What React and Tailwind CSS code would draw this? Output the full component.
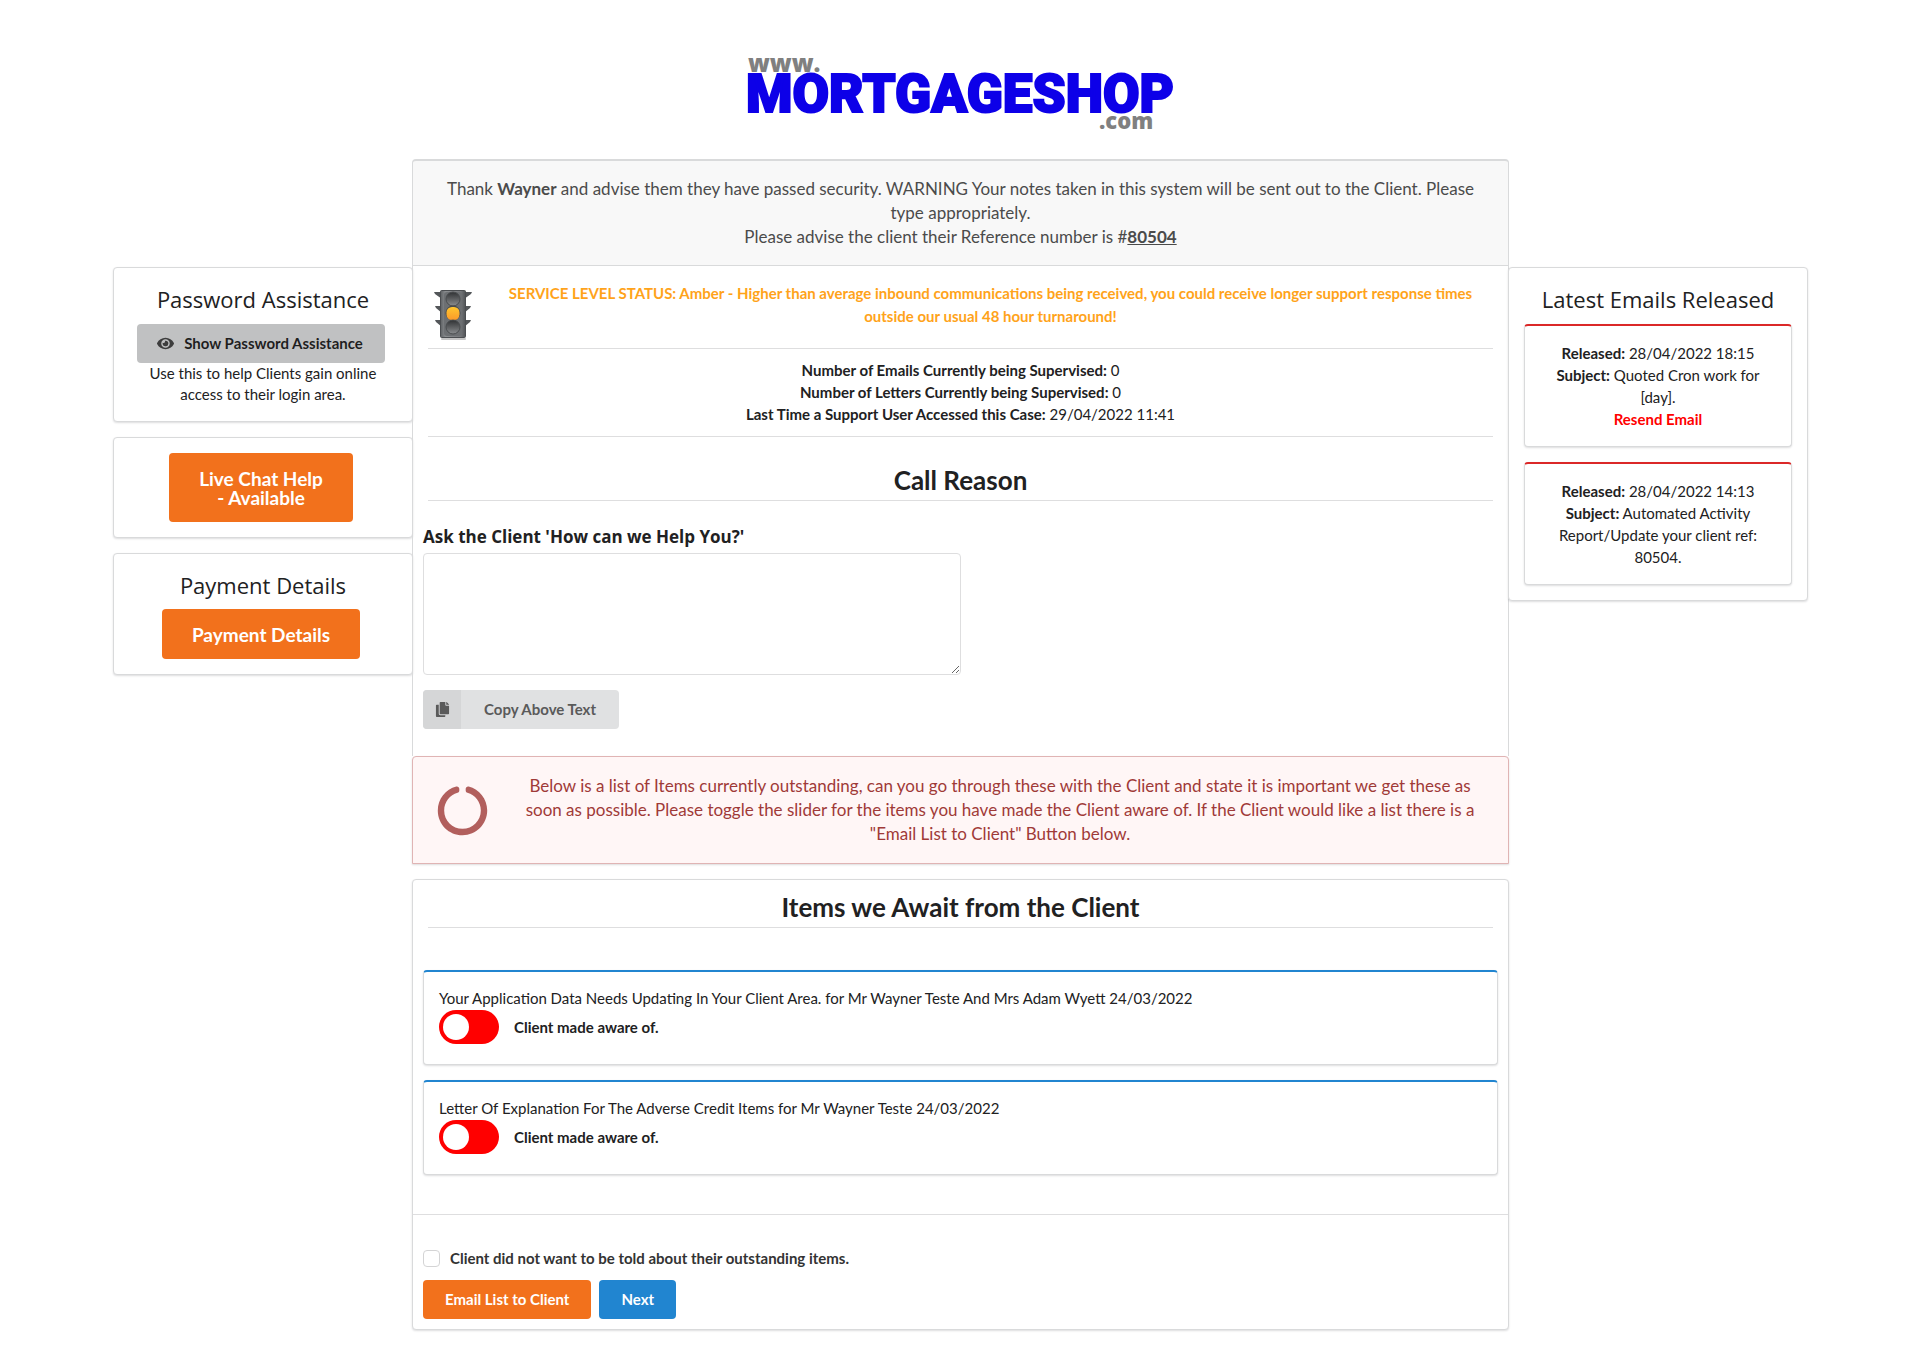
import { FaCircleNotch, FaCopy, FaEye } from "react-icons/fa";

const emails = [
    { released: "28/04/2022 18:15", subject: "Quoted Cron work for [day].", resend: true },
    { released: "28/04/2022 14:13", subject: "Automated Activity Report/Update your client ref: 80504.", resend: false },
];

const items = [
    "Your Application Data Needs Updating In Your Client Area. for Mr Wayner Teste And Mrs Adam Wyett 24/03/2022",
    "Letter Of Explanation For The Adverse Credit Items for Mr Wayner Teste 24/03/2022",
];

function Logo() {
    return (
        <svg viewBox="0 0 430 80" className="w-[430px] h-20 overflow-visible" role="img" aria-label="www.mortgageshop.com">
            <text x="2" y="20" fontSize="24" fontWeight="800" fill="#808080" fontFamily="Open Sans, sans-serif">www.</text>
            <text x="0" y="60" fontSize="53" fontWeight="900" fill="#0d00e8" stroke="#0d00e8" strokeWidth="2" fontFamily="Roboto, sans-serif">MORTGAGESHOP</text>
            <text x="353" y="77" fontSize="22" fontWeight="800" fill="#808080" fontFamily="Open Sans, sans-serif">.com</text>
        </svg>
    );
}

function TrafficLight() {
    return (
        <svg viewBox="0 0 38 50" className="w-[38px] h-[50px] shrink-0" aria-hidden="true">
            <defs>
                <linearGradient id="body" x1="0" x2="1" y1="0" y2="0">
                    <stop offset="0" stopColor="#5d6063" />
                    <stop offset="0.2" stopColor="#8b8e90" />
                    <stop offset="0.8" stopColor="#77797c" />
                    <stop offset="1" stopColor="#505356" />
                </linearGradient>
                <linearGradient id="dark" x1="0" x2="0" y1="0" y2="1">
                    <stop offset="0" stopColor="#2f3133" />
                    <stop offset="1" stopColor="#8a8d8f" />
                </linearGradient>
                <linearGradient id="amber" x1="0" x2="0" y1="0" y2="1">
                    <stop offset="0" stopColor="#ffc62e" />
                    <stop offset="1" stopColor="#fb9a2a" />
                </linearGradient>
            </defs>
            <path d="M0 2h8v7L1 4zM38 2h-8v7l7-5zM1 16h7v7l-6-5zM37 16h-7v7l6-5zM1 30h7v7l-6-5zM37 30h-7v7l6-5z" fill="#54575a" />
            <rect x="7" y="48" width="25" height="2" rx="1" fill="#c4c4c4" />
            <rect x="6.500" y="0.500" width="25" height="47" rx="1" fill="url(#body)" stroke="#4b4e51" />
            <rect x="10" y="2" width="18" height="44" rx="3" fill="#6c6f72" />
            <circle cx="19" cy="9" r="7" fill="url(#dark)" stroke="#4a4d4f" />
            <circle cx="19" cy="23" r="7.500" fill="#4a4c4e" />
            <rect x="12.500" y="17" width="13" height="13" rx="5.500" fill="url(#amber)" />
            <circle cx="19" cy="37" r="7" fill="url(#dark)" stroke="#4a4d4f" />
        </svg>
    );
}

function Segment({ className = "", children }) {
    return (
        <div className={`border border-[#d9dadb] rounded shadow-[0_1px_2px_0_rgba(34,36,38,0.15)] bg-white ${className}`}>
            {children}
        </div>
    );
}

function SideTitle({ children }) {
    return (
        <h3 className="font-['Open_Sans',sans-serif] font-normal text-[22px] leading-8">{children}</h3>
    );
}

function SectionTitle({ children }) {
    return (
        <h2 className="mx-[15px] pb-1 border-b border-[#dededf] text-center text-[26px] leading-8 font-bold">{children}</h2>
    );
}

function AwaitedItem({ text, id }) {
    return (
        <Segment className="border-t-2 border-t-[#2185d0] px-[15px] pt-[14px] pb-5">
            <p className="leading-6">{text}</p>
            <div className="flex items-center">
                <input
                    type="checkbox"
                    id={id}
                    className="appearance-none relative w-15 h-[34px] rounded-full bg-[#ff0000] checked:bg-green-600 cursor-pointer before:absolute before:left-1 before:bottom-1 before:size-[26px] before:rounded-full before:bg-white checked:before:left-[30px]"
                />
                <label htmlFor={id} className="pl-[15px] font-bold">Client made aware of.</label>
            </div>
        </Segment>
    );
}

function App() {
    return (
        <div className="pl-[113px] pr-28 pt-13 pb-4 font-[Lato,sans-serif] text-[15px] leading-[23px] text-[#212122]">
            <header className="flex justify-center pb-[27px]">
                <Logo />
            </header>

            <div className="flex items-start">
                {/* Left - Assistance */}
                <aside className="w-75 shrink-0 mt-[108px] space-y-[15px] text-center">
                    <Segment className="p-[15px] pb-4">
                        <SideTitle>Password Assistance</SideTitle>
                        <button className="mt-[9px] mr-1 h-[39px] pl-5 pr-[22px] inline-flex items-center rounded bg-[#c0c1c2] font-bold text-black/85 cursor-pointer">
                            <FaEye className="mr-[10px] size-[17px] opacity-80" />
                            Show Password Assistance
                        </button>
                        <p className="leading-[21px] px-4">Use this to help Clients gain online access to their login area.</p>
                    </Segment>
                    <Segment className="p-[15px]">
                        <button className="mr-1 w-46 h-[69px] px-7 rounded bg-[#f2711c] text-white text-[19px] leading-[19px] font-bold cursor-pointer align-top">
                            Live Chat Help - Available
                        </button>
                    </Segment>
                    <Segment className="p-[15px]">
                        <SideTitle>Payment Details</SideTitle>
                        <button className="mt-2 mr-1 h-[50px] px-[30px] rounded bg-[#f2711c] text-white text-[19px] leading-[19px] font-bold cursor-pointer align-top">
                            Payment Details
                        </button>
                    </Segment>
                </aside>

                {/* Center - Call */}
                <main className="flex-1 min-w-0 -mx-px">
                    <div className="border border-[#d9dadb] border-t-2 rounded-t bg-[#f8f8f8] px-7 py-4 text-center text-[17px] leading-6 text-[#4b4b4b]">
                        <p>
                            Thank <b>Wayner</b> and advise them they have passed security. WARNING Your notes taken in this system will be sent out to the Client. Please type appropriately.
                        </p>
                        <p>
                            Please advise the client their Reference number is #<b className="underline">80504</b>
                        </p>
                    </div>

                    <section className="border-x border-[#d9dadb] px-[10px] pb-[27px]">
                        <div className="mx-[5px] border-b border-[#dededf] pl-[6px] pt-4 pb-2 flex gap-4">
                            <div className="pt-2">
                                <TrafficLight />
                            </div>
                            <p className="flex-1 text-center font-bold text-[#ffa31a]">
                                SERVICE LEVEL STATUS: Amber - Higher than average inbound communications being received, you could receive longer support response times outside our usual 48 hour turnaround!
                            </p>
                        </div>
                        <div className="mx-[5px] border-b border-[#dededf] pt-[10px] pb-[11px] leading-[22px] text-center">
                            <p><b>Number of Emails Currently being Supervised:</b> 0</p>
                            <p><b>Number of Letters Currently being Supervised:</b> 0</p>
                            <p><b>Last Time a Support User Accessed this Case:</b> 29/04/2022 11:41</p>
                        </div>
                        <div className="-mx-[10px] mt-[27px]">
                            <SectionTitle>Call Reason</SectionTitle>
                        </div>

                        <label htmlFor="reason" className="block mt-6 mb-1 font-['Open_Sans',sans-serif] text-[17px] leading-6 font-bold">
                            Ask the Client 'How can we Help You?'
                        </label>
                        <textarea id="reason" className="block w-1/2 h-[122px] p-3 border border-[#dededf] rounded resize" />
                        <button className="mt-[15px] h-[39px] flex items-center rounded bg-[#e0e1e2] overflow-hidden font-bold text-[#5a5a5a] cursor-pointer">
                            <span className="w-[38px] h-full flex items-center justify-center bg-[#d5d6d7]">
                                <FaCopy className="size-[15px]" />
                            </span>
                            <span className="px-[23px]">Copy Above Text</span>
                        </button>
                    </section>

                    <div className="flex items-center border border-[#e0b4b4] rounded-t bg-[#fff6f6] shadow-[0_1px_2px_0_rgba(34,36,38,0.15)] px-6 py-[17px] text-[17px] leading-6 text-[#9f3a38]">
                        <FaCircleNotch className="size-[51px] shrink-0 opacity-80" />
                        <p className="flex-1 pl-7 text-center">
                            Below is a list of Items currently outstanding, can you go through these with the Client and state it is important we get these as soon as possible. Please toggle the slider for the items you have made the Client aware of. If the Client would like a list there is a "Email List to Client" Button below.
                        </p>
                    </div>

                    <Segment className="mt-[15px]">
                        <div className="pt-[11px]">
                            <SectionTitle>Items we Await from the Client</SectionTitle>
                        </div>
                        <div className="px-[10px] pt-[42px] pb-[39px] space-y-[15px]">
                            {items.map((text, i) => (
                                <AwaitedItem key={text} text={text} id={`item-${i}`} />
                            ))}
                        </div>
                        <div className="border-t border-[#dededf] px-[10px] pt-8 pb-[10px]">
                            <div className="flex items-center">
                                <input
                                    type="checkbox"
                                    id="declined"
                                    className="appearance-none size-[17px] border border-[#d4d4d5] rounded checked:bg-[#2185d0] cursor-pointer"
                                />
                                <label htmlFor="declined" className="pl-[10px] font-bold text-[#333]">
                                    Client did not want to be told about their outstanding items.
                                </label>
                            </div>
                            <div className="mt-[10px] flex gap-2 text-white font-bold">
                                <button className="h-[39px] px-[22px] rounded bg-[#f2711c] cursor-pointer">Email List to Client</button>
                                <button className="h-[39px] px-[22px] rounded bg-[#2185d0] cursor-pointer">Next</button>
                            </div>
                        </div>
                    </Segment>
                </main>

                {/* Right - Emails */}
                <aside className="w-75 shrink-0 mt-[108px] text-center">
                    <Segment className="p-[15px]">
                        <SideTitle>Latest Emails Released</SideTitle>
                        <div className="mt-[9px] space-y-[15px]">
                            {emails.map((email) => (
                                <Segment key={email.released} className="border-t-2 border-t-[#db2828] p-4 leading-[22px]">
                                    <p><b>Released:</b> {email.released}</p>
                                    <p><b>Subject:</b> {email.subject}</p>
                                    {email.resend && <a href="#" className="block font-bold text-[#ff0000]">Resend Email</a>}
                                </Segment>
                            ))}
                        </div>
                    </Segment>
                </aside>
            </div>
        </div>
    );
}

export default App;
